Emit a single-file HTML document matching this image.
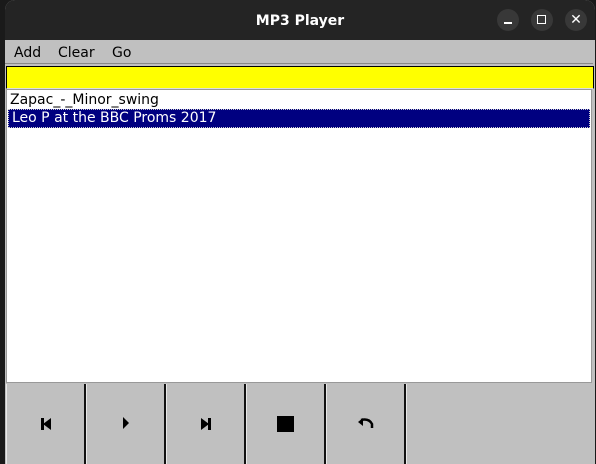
<!DOCTYPE html>
<html><head><style>
body{margin:0;width:596px;height:464px;background:#1a1a1a;position:relative;overflow:hidden;font-family:"DejaVu Sans","Liberation Sans",sans-serif;}
.win{position:absolute;left:5px;top:0;width:590px;height:464px;background:#c0c0c0;border-radius:10px 10px 0 0;overflow:hidden}
.title{position:absolute;left:0;top:0;width:590px;height:40px;background:#242424;color:#fff;font-weight:bold;font-size:14px;text-align:center;line-height:42px}
.tb{position:absolute;top:9px;width:22px;height:22px;border-radius:50%;background:#383838}
.menu{position:absolute;top:40px;left:0;width:588px;height:23px;background:#c0c0c0;font-size:14px;line-height:26px;border-bottom:1px solid #888}
.menu span{position:absolute}
.yel{position:absolute;left:1px;top:66px;width:586px;height:21px;background:#ff0;border:1px solid #000;border-bottom-color:#ddd}
.list{position:absolute;left:1px;top:89px;width:586px;height:292px;background:#fff;border:1px solid #999;font-size:14px;padding-top:2px;box-sizing:border-box;height:294px}
.row{height:17px;line-height:17px;padding-left:3px}
.sel{background:#000080;color:#fff;border:1px dotted #ccc;margin:0 1px}
.btn{position:absolute;top:384px;width:77px;height:80px;background:#c0c0c0;border-left:1px solid #e8e8e8;border-right:2px solid #111;display:flex;align-items:center;justify-content:center}
</style></head><body>
<div class="win">
<div class="title">MP3 Player</div>
<div class="tb" style="left:492px"><div style="position:absolute;left:7px;top:13px;width:8px;height:1.5px;background:#fff"></div></div>
<div class="tb" style="left:526px"><div style="position:absolute;left:6px;top:6px;width:7px;height:7px;border:1.5px solid #fff"></div></div>
<div class="tb" style="left:560px;color:#fff;font-size:14px;text-align:center;line-height:22px">✕</div>
<div class="menu"><span style="left:9px">Add</span><span style="left:53px">Clear</span><span style="left:107px">Go</span></div>
<div class="yel"></div>
<div class="list"><div class="row">Zapac_-_Minor_swing</div><div class="row sel">Leo P at the BBC Proms 2017</div></div>
<div class="btn" style="left:1px"><svg width="14" height="14"><rect x="2" y="1" width="3" height="12"/><path d="M4 7L12 1V13Z"/></svg></div>
<div class="btn" style="left:81px"><svg width="14" height="14"><path d="M4 0L10 6L4 12Z"/></svg></div>
<div class="btn" style="left:161px"><svg width="14" height="14"><rect x="9" y="1" width="3" height="12"/><path d="M10 7L2 1V13Z"/></svg></div>
<div class="btn" style="left:241px"><svg width="18" height="18"><rect x="0" y="1" width="17" height="16"/></svg></div>
<div class="btn" style="left:321px"><svg width="18" height="14"><path d="M4 3 Q12 1 15 7 L15 11" fill="none" stroke="#000" stroke-width="2.5"/><path d="M1 5L6 1V9Z"/></svg></div>
<div class="btn" style="left:401px;width:200px;border-right:none"></div>
</div>
</body></html>
